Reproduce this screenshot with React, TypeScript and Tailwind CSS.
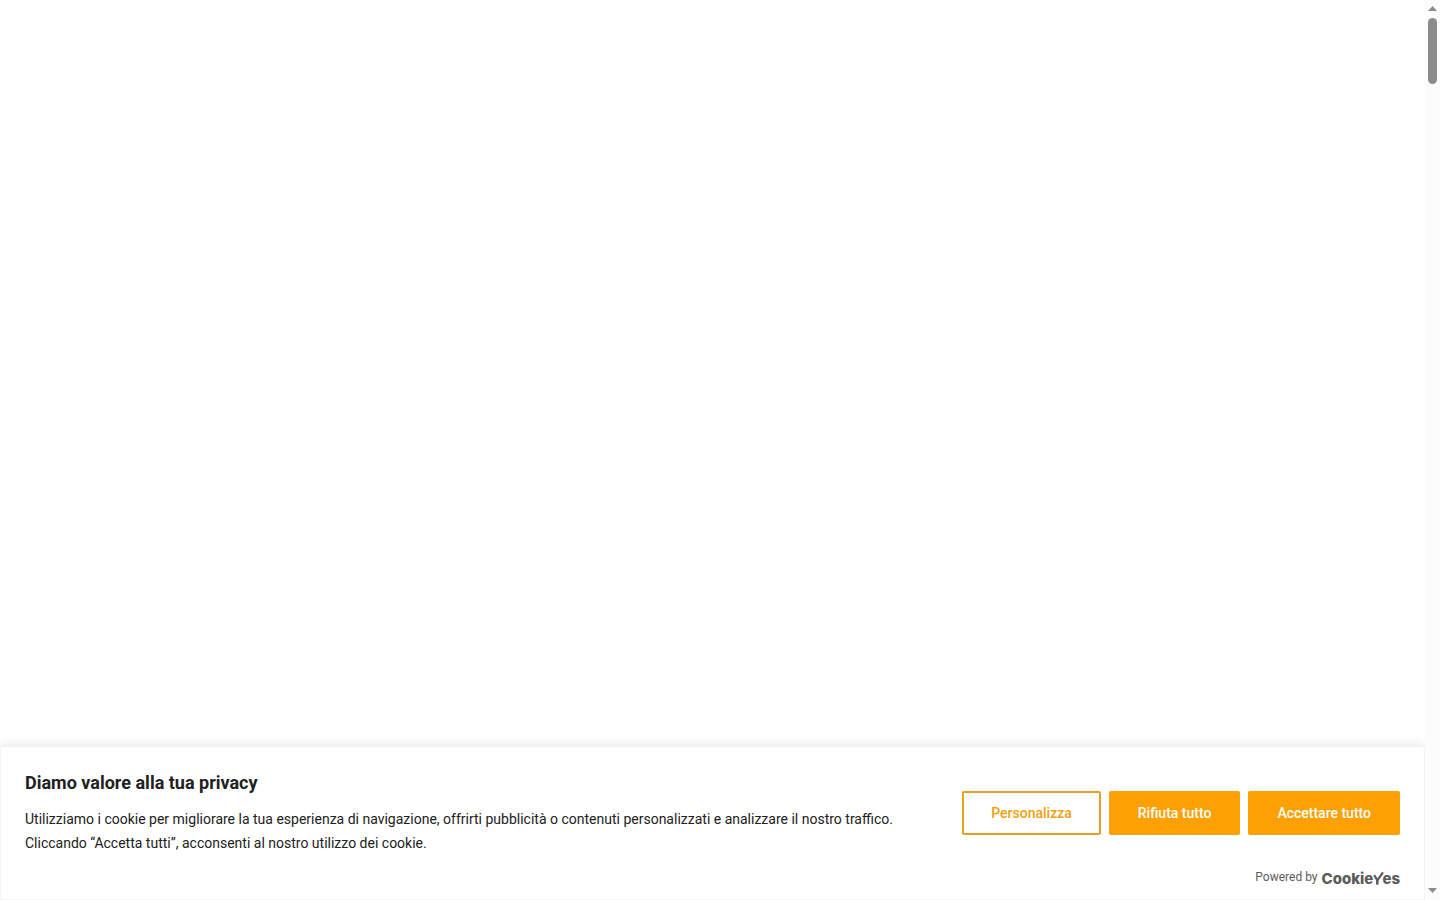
import { useState } from "react";

const CONSENT_ACTIONS = [
  { label: "Personalizza", variant: "outline" },
  { label: "Rifiuta tutto", variant: "solid" },
  { label: "Accettare tutto", variant: "solid" },
] as const;

function ConsentButton({
  label,
  variant,
  onClick,
}: {
  label: string;
  variant: (typeof CONSENT_ACTIONS)[number]["variant"];
  onClick?: () => void;
}) {
  const base = "h-11 shrink-0 cursor-pointer whitespace-nowrap rounded-xs border-2 px-[27px] text-sm font-medium leading-6";
  const colors =
    variant === "outline" ? "border-[#e9a021] bg-white text-[#f0a010]" : "border-[#fca004] bg-[#fca004] text-white";

  return (
    <button type="button" className={`${base} ${colors}`} onClick={onClick}>
      {label}
    </button>
  );
}

function CookieYesLogo() {
  return (
    <a
      href="#cookieyes"
      aria-label="CookieYes"
      className="flex items-center pt-0.5 font-['Inter',sans-serif] text-[15px] font-extrabold leading-5 text-[#5c5c5c]"
    >
      <span>Cookie</span>
      <svg className="h-4 w-[11px]" viewBox="0 0 11 16" fill="none" stroke="currentColor" aria-hidden="true">
        <path d="M1.2 4.2 3.8 8.4 5 8.4 10 1.4" strokeWidth="2.2" />
        <path d="M4.3 8V13.6" strokeWidth="2.6" />
      </svg>
      <span className="-ml-0.5">es</span>
    </a>
  );
}

function CookieBanner({ onClose }: { onClose: () => void }) {
  return (
    <section
      aria-labelledby="consent-title"
      className="border border-[#f4f4f4] bg-white text-[#212121] shadow-[0_-1px_10px_0_rgba(172,171,171,0.3)]"
    >
      <div className="flex flex-wrap items-center justify-between gap-x-8 gap-y-4 px-6 pt-6 lg:flex-nowrap">
        <div className="min-w-0">
          <h2 id="consent-title" className="mb-3 text-lg font-bold leading-6">
            Diamo valore alla tua privacy
          </h2>
          <p className="text-sm leading-6">
            Utilizziamo i cookie per migliorare la tua esperienza di navigazione, offrirti pubblicità o contenuti
            personalizzati e analizzare il nostro traffico. Cliccando “Accetta tutti”, acconsenti al nostro utilizzo dei
            cookie.
          </p>
        </div>
        <div className="flex flex-wrap gap-2 lg:flex-nowrap">
          {CONSENT_ACTIONS.map((action) => (
            <ConsentButton
              key={action.label}
              label={action.label}
              variant={action.variant}
              onClick={action.variant === "solid" ? onClose : undefined}
            />
          ))}
        </div>
      </div>
      <div className="flex items-start justify-end gap-1 px-6 pt-3 pb-2.5 text-xs leading-5 text-[#5c5c5c]">
        <span>Powered by</span>
        <CookieYesLogo />
      </div>
    </section>
  );
}

function ScrollRail() {
  return (
    <div className="flex w-[15px] shrink-0 flex-col items-center justify-between bg-[#fcfcfc] text-[#8b8b8b]" aria-hidden="true">
      <div className="flex flex-col items-center">
        <svg className="h-[18px] w-[15px]" viewBox="0 0 15 18" fill="currentColor">
          <path d="M3 11h9L7.5 6z" />
        </svg>
        <div className="h-[66px] w-[9px] rounded-full bg-[#8b8b8b]" />
      </div>
      <svg className="h-[18px] w-[15px]" viewBox="0 0 15 18" fill="currentColor">
        <path d="M3 6h9l-4.5 5z" />
      </svg>
    </div>
  );
}

export default function App() {
  const [open, setOpen] = useState(true);

  return (
    <div className="flex min-h-screen bg-white font-['Roboto',sans-serif]">
      <div className="flex min-w-0 flex-1 flex-col">
        <main className="flex-1" />
        {open && <CookieBanner onClose={() => setOpen(false)} />}
      </div>
      <ScrollRail />
    </div>
  );
}
